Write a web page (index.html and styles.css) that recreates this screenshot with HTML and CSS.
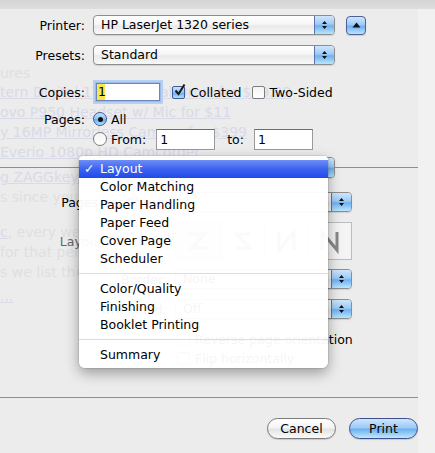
FILE: index.html
```html
<!DOCTYPE html>
<html>
<head>
<meta charset="utf-8">
<link rel="stylesheet" href="styles.css">
</head>
<body>
<div class="page">
  <div class="bg">
    <div class="bg-line t1 grey">ures</div>
    <div class="bg-line t2 link">tern Digital 1TB External Drive for $99.99</div>
    <div class="bg-line t3 link">ovo P950 Headset w/ Mic for $11</div>
    <div class="bg-line t3 link">y 16MP Mirrorless Camera for $399</div>
    <div class="bg-line t3 link">Everio 1080p HD Camcorder</div>
    <div class="bg-line t4 link">g ZAGGkeys Keyboard Case</div>
    <div class="bg-line t3 grey">s since your purchase.</div>
    <div class="bg-line t5 grey"><span class="link">c</span>, every weekday we bring</div>
    <div class="bg-line t3 grey">for that period.</div>
    <div class="bg-line t3 grey">s we list them here.</div>
    <div class="bg-line t6 link">...</div>
  </div>

  <div class="sheet">
    <div class="topband"></div>

    <div class="row r-printer">
      <span class="label">Printer:</span>
      <div class="popup w242"><span class="popup-text">HP LaserJet 1320 series</span><span class="stepper"><svg width="7" height="12" viewBox="0 0 7 12"><path d="M1 5L3.5 2L6 5Z M1 7L3.5 10L6 7Z" fill="#111"/></svg></span></div>
      <div class="disclose"><svg width="9" height="6" viewBox="0 0 9 6"><path d="M0.5 5.5L4.5 0.5L8.5 5.5Z" fill="#111"/></svg></div>
    </div>

    <div class="row r-presets">
      <span class="label">Presets:</span>
      <div class="popup w242"><span class="popup-text">Standard</span><span class="stepper"><svg width="7" height="12" viewBox="0 0 7 12"><path d="M1 5L3.5 2L6 5Z M1 7L3.5 10L6 7Z" fill="#111"/></svg></span></div>
    </div>

    <div class="row r-copies">
      <span class="label">Copies:</span>
      <div class="field focus"><span class="sel">1</span></div>
      <span class="check on"><svg width="13" height="13" viewBox="0 0 13 13"><path d="M2.5 6.5L5.5 10L11.5 0.5" fill="none" stroke="#1a1a1a" stroke-width="2"/></svg></span>
      <span class="ctext">Collated</span>
      <span class="check off"></span>
      <span class="ctext">Two-Sided</span>
    </div>

    <div class="row r-all">
      <span class="label">Pages:</span>
      <span class="radio on"><span class="dot"></span></span>
      <span class="rtext">All</span>
    </div>

    <div class="row r-from">
      <span class="label"></span>
      <span class="radio off"></span>
      <span class="rtext">From:</span>
      <div class="field small f1">1</div>
      <span class="to">to:</span>
      <div class="field small">1</div>
    </div>

    <div class="panel-head">
      <div class="popup w242 ph"><span class="popup-text">Layout</span><span class="stepper"><svg width="7" height="12" viewBox="0 0 7 12"><path d="M1 5L3.5 2L6 5Z M1 7L3.5 10L6 7Z" fill="#111"/></svg></span></div>
    </div>

    <div class="row r-pps">
      <span class="label wide">Pages per Sheet:</span>
      <div class="popup w177"><span class="popup-text">1</span><span class="stepper"><svg width="7" height="12" viewBox="0 0 7 12"><path d="M1 5L3.5 2L6 5Z M1 7L3.5 10L6 7Z" fill="#111"/></svg></span></div>
    </div>

    <div class="row r-dir">
      <span class="label wide dim">Layout Direction:</span>
      <div class="seg">
        <span class="seg-btn sel"><svg width="30" height="30" viewBox="0 0 30 30"><path d="M6 8H22L8 22H24" fill="none" stroke="#888" stroke-width="3"/></svg></span>
        <span class="seg-btn"><svg width="30" height="30" viewBox="0 0 30 30"><path d="M22 8H8L22 22H8" fill="none" stroke="#888" stroke-width="3"/></svg></span>
        <span class="seg-btn"><svg width="30" height="30" viewBox="0 0 30 30"><path d="M23 24V6L8 24V6" fill="none" stroke="#888" stroke-width="3"/></svg></span>
        <span class="seg-btn last"><svg width="30" height="30" viewBox="0 0 30 30"><path d="M7 24V6L22 24V6" fill="none" stroke="#888" stroke-width="3"/></svg></span>
      </div>
    </div>

    <div class="row r-border">
      <span class="label wide">Border:</span>
      <div class="popup w177"><span class="popup-text">None</span><span class="stepper"><svg width="7" height="12" viewBox="0 0 7 12"><path d="M1 5L3.5 2L6 5Z M1 7L3.5 10L6 7Z" fill="#111"/></svg></span></div>
    </div>

    <div class="row r-two">
      <span class="label wide">Two-Sided:</span>
      <div class="popup w177"><span class="popup-text">Off</span><span class="stepper"><svg width="7" height="12" viewBox="0 0 7 12"><path d="M1 5L3.5 2L6 5Z M1 7L3.5 10L6 7Z" fill="#111"/></svg></span></div>
    </div>

    <div class="row r-rev">
      <span class="label wide"></span>
      <span class="check off"></span>
      <span class="ctext">Reverse page orientation</span>
    </div>

    <div class="row r-flip">
      <span class="label wide"></span>
      <span class="check off"></span>
      <span class="ctext">Flip horizontally</span>
    </div>

    <div class="sep-bottom"></div>

    <div class="buttons">
      <span class="btn">Cancel</span>
      <span class="btn default">Print</span>
    </div>
  </div>

  <div class="menu">
    <div class="mi hl"><span class="tick">✓</span>Layout</div>
    <div class="mi">Color Matching</div>
    <div class="mi">Paper Handling</div>
    <div class="mi">Paper Feed</div>
    <div class="mi">Cover Page</div>
    <div class="mi">Scheduler</div>
    <div class="msep"></div>
    <div class="mi">Color/Quality</div>
    <div class="mi">Finishing</div>
    <div class="mi">Booklet Printing</div>
    <div class="msep"></div>
    <div class="mi">Summary</div>
  </div>
</div>
</body>
</html>
```

FILE: styles.css
```css
* { box-sizing: border-box; }

html, body {
  margin: 0;
  padding: 0;
}

body {
  width: 435px;
  height: 453px;
  overflow: hidden;
  background: #ececec;
  font-family: "DejaVu Sans", "Liberation Sans", sans-serif;
  font-size: 12.5px;
  color: #000;
}

.page {
  position: relative;
  width: 435px;
  height: 453px;
  background: linear-gradient(to right, #ececec 0, #ececec 418px, #f1f1f1 418px);
}

/* faint web page behind the translucent sheet */
.bg {
  padding-top: 64px;
  font-size: 14px;
  line-height: 18px;
}
.bg-line { white-space: nowrap; }
.bg-line.grey { color: #dfdfe2; }
.bg-line.link, .bg .link { color: #d8dae8; text-decoration: underline; }
.t2 { margin-top: 1px; }
.t3 { margin-top: 2px; }
.t4 { margin-top: 7px; }
.t5 { margin-top: 17px; }
.t6 { margin-top: 6px; }

.sheet {
  position: absolute;
  inset: 0;
  display: flex;
  flex-direction: column;
}

.topband {
  height: 9px;
  background: linear-gradient(#d4d4d4, #dedede);
  flex: none;
}

.row {
  display: flex;
  align-items: center;
  flex: none;
}
.label {
  width: 85px;
  margin-right: 8px;
  text-align: right;
  white-space: nowrap;
  flex: none;
}
.label.wide { width: 167px; }
.label.dim { color: #666; }

.r-printer { height: 20px; margin-top: 6px; }
.r-presets { height: 20px; margin-top: 10px; }
.r-copies { height: 24px; margin-top: 15px; }
.r-all { height: 18px; margin-top: 6px; }
.r-from { height: 22px; margin-top: 0; }

/* popup button */
.popup {
  display: flex;
  height: 20px;
  border: 1px solid #8d8d8d;
  border-radius: 4px;
  background: linear-gradient(#ffffff, #f6f6f6 45%, #e9e9e9 55%, #f9f9f9);
  box-shadow: 0 1px 1px rgba(0, 0, 0, 0.12);
  flex: none;
  overflow: hidden;
}
.w242 { width: 242px; }
.w177 { width: 177px; }
.popup-text {
  flex: 1;
  padding-left: 7px;
  line-height: 18px;
  white-space: nowrap;
}
.stepper {
  width: 20px;
  display: flex;
  align-items: center;
  justify-content: center;
  border-left: 1px solid #5d74a8;
  background: linear-gradient(#cfe6fd, #9dcbf7 45%, #70b1f1 55%, #b8e6fe);
}

.disclose {
  width: 20px;
  height: 19px;
  margin-left: 11px;
  border: 1px solid #4f5f9c;
  border-radius: 4px;
  background: linear-gradient(#cfe6fd, #9dcbf7 45%, #70b1f1 55%, #b8e6fe);
  display: flex;
  align-items: center;
  justify-content: center;
  box-shadow: 0 1px 1px rgba(0, 0, 0, 0.15);
}

/* text fields */
.field {
  height: 21px;
  background: #fff;
  border: 1px solid #9a9a9a;
  border-top-color: #6e6e6e;
  padding-left: 3px;
  line-height: 19px;
  flex: none;
}
.field.focus {
  width: 64px;
  height: 18px;
  margin-left: 3px;
  border-color: #6b86b8;
  box-shadow: 0 0 0 1px #9cbbe6, 0 0 0 3px #b7cff0;
  padding-left: 0;
  line-height: 16px;
  margin-right: 12px;
}
.sel {
  display: inline-block;
  background: #f7e64f;
  padding: 0 1px 0 1px;
  width: 8px;
  text-align: center;
}
.field.small { width: 59px; }
.field.f1 { margin-left: 10px; }
.to { margin-left: 12px; margin-right: 10px; }

/* checkboxes */
.check {
  width: 13px;
  height: 13px;
  border: 1px solid #7d7d7d;
  border-radius: 2px;
  background: linear-gradient(#f4f4f4, #ffffff);
  flex: none;
  position: relative;
}
.check.on {
  border-color: #3f5a94;
  background: linear-gradient(#c9e3fc, #8fc4f6 50%, #6aaef0 55%, #b3e2fd);
}
.check.on svg { position: absolute; left: 0; top: -3px; }
.ctext { margin-left: 5px; margin-right: 10px; white-space: nowrap; }

/* radios */
.radio {
  width: 14px;
  height: 14px;
  border-radius: 50%;
  border: 1px solid #7a7a7a;
  background: linear-gradient(#f3f3f3, #ffffff);
  display: flex;
  align-items: center;
  justify-content: center;
  flex: none;
}
.radio.on {
  border-color: #3f5a94;
  background: linear-gradient(#c9e3fc, #8fc4f6 50%, #6aaef0 55%, #b3e2fd);
}
.dot { width: 5px; height: 5px; border-radius: 50%; background: #111; }
.rtext { margin-left: 4px; }

/* panel popup on group line */
.panel-head {
  width: 418px;
  height: 21px;
  margin-top: 7px;
  flex: none;
  background: linear-gradient(transparent 10px, #8e8e8e 10px, #8e8e8e 11px, transparent 11px);
}
.panel-head .popup { margin-left: 93px; height: 21px; }

.r-pps { height: 20px; margin-top: 14px; }
.r-dir { height: 38px; margin-top: 10px; }
.r-border { height: 20px; margin-top: 9px; }
.r-two { height: 20px; margin-top: 10px; }
.r-rev { height: 16px; margin-top: 12px; }
.r-flip { height: 16px; margin-top: 3px; }
.r-rev .check, .r-flip .check { margin-left: 2px; }

.seg {
  display: flex;
  width: 177px;
  height: 38px;
  border: 1px solid #bcbcbc;
  background: #f4f4f4;
}
.seg-btn {
  flex: 1;
  display: flex;
  align-items: center;
  justify-content: center;
  border-right: 1px solid #c8c8c8;
}
.seg-btn.last { border-right: 0; }
.seg-btn.sel { background: #dcdcdc; }

.sep-bottom {
  width: 418px;
  height: 1px;
  background: #8e8e8e;
  margin-top: 31px;
  flex: none;
}

.buttons {
  display: flex;
  justify-content: flex-end;
  gap: 13px;
  padding-right: 17px;
  margin-top: 20px;
  flex: none;
}
.btn {
  width: 69px;
  height: 21px;
  border-radius: 11px;
  border: 1px solid #7b7b7b;
  background: linear-gradient(#ffffff, #f4f4f4 45%, #e4e4e4 55%, #fbfbfb);
  box-shadow: 0 1px 1px rgba(0, 0, 0, 0.15);
  text-align: center;
  line-height: 19px;
}
.btn.default {
  border-color: #3d4f8f;
  background: linear-gradient(#cfe6fd, #9dcbf7 45%, #6fb0f1 55%, #bdeafe);
}

/* pop-up menu */
.menu {
  position: absolute;
  left: 79px;
  top: 156px;
  width: 249px;
  height: 212px;
  padding-top: 4px;
  background: rgba(255, 255, 255, 0.96);
  border-radius: 4px 4px 6px 6px;
  box-shadow: 0 5px 14px rgba(0, 0, 0, 0.35), 0 0 0 1px rgba(0, 0, 0, 0.08);
  display: flex;
  flex-direction: column;
}
.mi {
  height: 18px;
  line-height: 18px;
  padding-left: 21px;
  position: relative;
  white-space: nowrap;
}
.mi.hl {
  color: #fff;
  background: linear-gradient(#6d8ef6, #3d63ef 50%, #2149e9);
}
.tick {
  position: absolute;
  left: 5px;
  top: 0;
  font-weight: bold;
}
.msep {
  height: 12px;
  background: linear-gradient(transparent 5px, #dcdcdc 5px, #dcdcdc 6px, transparent 6px);
}
```
